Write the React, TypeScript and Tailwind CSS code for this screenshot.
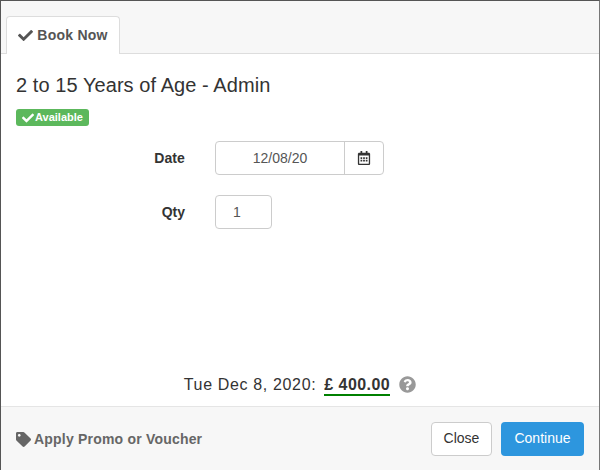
import { FaCheck, FaTag, FaQuestionCircle, FaRegCalendarAlt } from "react-icons/fa";

export default function App() {
  return (
    <div className="flex h-[470px] w-[600px] flex-col overflow-hidden border-t border-l border-r border-t-[#555] border-l-[#555] border-r-[#777] bg-white font-['Liberation_Sans',Arial,sans-serif] text-[14px] text-[#333]">
      <div className="flex h-[53px] shrink-0 items-end border-b border-[#ddd] bg-[#f7f7f7] pl-[5px]">
        <div className="mb-[-1px] flex h-[38px] w-[114px] items-center justify-center gap-[4px] rounded-t-[4px] border border-b-0 border-[#ddd] bg-white text-[14px] font-bold text-[#555] tracking-[0.25px]">
          <FaCheck className="text-[15px]" />
          <span>Book Now</span>
        </div>
      </div>

      <div className="flex min-h-0 flex-1 flex-col px-[15px]">
        <h1 className="mt-[19px] text-[20px] leading-[24px] font-normal tracking-[0.07px] text-[#333]">2 to 15 Years of Age - Admin</h1>
        <div className="mt-[12px] flex h-[17px] w-[73px] items-center gap-[1px] rounded-[3px] bg-[#5cb85c] pl-[6px] text-[11px] font-bold text-white">
          <FaCheck className="text-[12px]" />
          <span>Available</span>
        </div>

        <div className="mt-[15px] flex h-[34px] items-center">
          <span className="w-[169px] text-right font-bold tracking-[0.1px]">Date</span>
          <div className="ml-[30px] flex h-[34px] w-[169px] rounded-[4px] border border-[#ccc]">
            <span className="flex flex-1 items-center justify-center text-[#555]">12/08/20</span>
            <span className="flex w-[39px] items-center justify-center border-l border-[#ccc] text-[#333]">
              <FaRegCalendarAlt className="text-[14px]" />
            </span>
          </div>
        </div>

        <div className="mt-[20px] flex h-[34px] items-center">
          <span className="w-[169px] text-right font-bold">Qty</span>
          <div className="ml-[30px] flex h-[34px] w-[57px] items-center rounded-[4px] border border-[#ccc] pl-[17px] text-[#555]">1</div>
        </div>

        <div className="mt-auto mb-[9px] flex items-center justify-center gap-[8px] text-[16px]">
          <span className="tracking-[0.65px]">Tue Dec 8, 2020:</span>
          <span className="border-b-2 border-[#008000] text-[16px] leading-[19px] font-bold tracking-[0.45px]">£ 400.00</span>
          <FaQuestionCircle className="mb-[2px] ml-[1px] text-[17px] text-[#999]" />
        </div>
      </div>

      <div className="flex h-[64px] shrink-0 items-center justify-between border-t border-[#e5e5e5] bg-[#f7f7f7] pr-[15px] pl-[15px]">
        <div className="flex items-center gap-[3px] pt-[1px] text-[14px] font-bold text-[#666]">
          <FaTag className="text-[15px]" />
          <span className="tracking-[0.2px]">Apply Promo or Voucher</span>
        </div>
        <div className="flex items-center gap-[9px]">
          <button className="h-[34px] w-[61px] rounded-[4px] border border-[#ccc] bg-white text-[14px] text-[#333]">Close</button>
          <button className="h-[34px] w-[83px] rounded-[4px] bg-[#2d96de] text-[14px] text-white">Continue</button>
        </div>
      </div>
    </div>
  );
}
